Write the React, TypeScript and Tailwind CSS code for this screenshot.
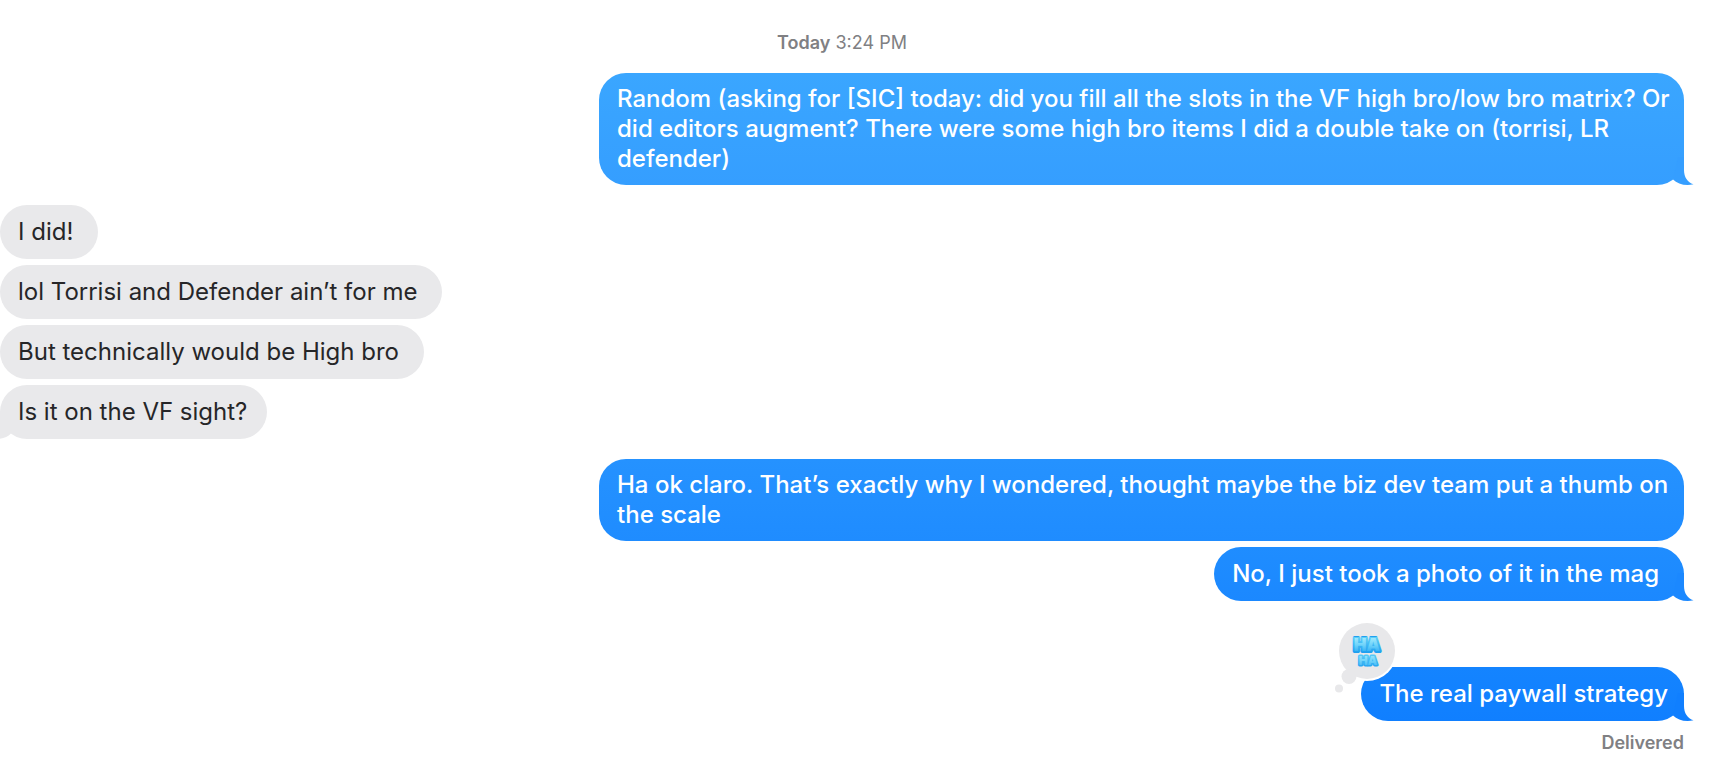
import React from 'react';
import clsx from 'clsx';

type Side = 'sent' | 'received';

interface Message {
  text: string;
  side: Side;
  color: string;
  tailColor?: string;
  padding?: string;
  reaction?: boolean;
}

const RECEIVED = 'bg-[#e9e9eb] text-[#262628]';

const GROUPS: Message[][] = [
  [
    {
      text: 'Random (asking for [SIC] today: did you fill all the slots in the VF high bro/low bro matrix? Or did editors augment? There were some high bro items I did a double take on (torrisi, LR defender)',
      side: 'sent',
      color: 'bg-linear-to-b from-[#3aa6ff] to-[#359eff] text-white',
      tailColor: 'text-[#359eff]',
      padding: 'py-[11px] pr-2',
    },
  ],
  [
    { text: 'I did!', side: 'received', color: RECEIVED },
    { text: 'lol Torrisi and Defender ain’t for me', side: 'received', color: RECEIVED },
    { text: 'But technically would be High bro', side: 'received', color: RECEIVED },
    {
      text: 'Is it on the VF sight?',
      side: 'received',
      color: RECEIVED,
      tailColor: 'text-[#e9e9eb]',
      padding: 'py-3 pr-5',
    },
  ],
  [
    {
      text: 'Ha ok claro. That’s exactly why I wondered, thought maybe the biz dev team put a thumb on the scale',
      side: 'sent',
      color: 'bg-linear-to-b from-[#2592ff] to-[#1f8cff] text-white',
      padding: 'py-[11px] pr-2',
    },
    {
      text: 'No, I just took a photo of it in the mag',
      side: 'sent',
      color: 'bg-linear-to-b from-[#1f8dff] to-[#1b88ff] text-white',
      tailColor: 'text-[#1b88ff]',
    },
  ],
];

const LAST_MESSAGE: Message = {
  text: 'The real paywall strategy',
  side: 'sent',
  color: 'bg-linear-to-b from-[#1484ff] to-[#107fff] text-white',
  tailColor: 'text-[#107fff]',
  padding: 'py-3 pr-4',
  reaction: true,
};

function Tail({ side, color }: { side: Side; color: string }) {
  return (
    <svg
      viewBox="0 0 24 28"
      width={24}
      height={28}
      aria-hidden="true"
      className={clsx('absolute bottom-0', color, side === 'sent' ? '-right-[10px]' : '-left-[10px] -scale-x-100')}
    >
      <path
        d="M8 0H14V13C14 20 17.5 25.5 23.5 27.3C15 29 7.5 27 3 22.4Z"
        fill="currentColor"
      />
    </svg>
  );
}

function HahaReaction() {
  return (
    <svg
      viewBox="0 0 66 76"
      width={66}
      height={76}
      role="img"
      aria-label="Haha"
      className="absolute -left-7 -top-[46px]"
    >
      <defs>
        {/* repeats every 16px so each row of letters gets its own fade */}
        <linearGradient id="haha-fill" gradientUnits="userSpaceOnUse" x1="0" y1="16" x2="0" y2="32" spreadMethod="repeat">
          <stop offset="0" stopColor="#a5ebfd" />
          <stop offset="0.5" stopColor="#6fd3fa" />
          <stop offset="1" stopColor="#2aa9f3" />
        </linearGradient>
        <linearGradient id="haha-edge" gradientUnits="userSpaceOnUse" x1="0" y1="16" x2="0" y2="32" spreadMethod="repeat">
          <stop offset="0" stopColor="#5fcff8" />
          <stop offset="1" stopColor="#1d9eef" />
        </linearGradient>
      </defs>
      <circle cx="34" cy="30" r="30" fill="#fff" />
      <circle cx="34" cy="30" r="28" fill="#e8e8ea" />
      <circle cx="16" cy="55.5" r="7.5" fill="#e8e8ea" />
      <circle cx="6" cy="67.5" r="4" fill="#e8e8ea" />
      <text
        fontFamily="Inter, sans-serif"
        fontWeight="900"
        textAnchor="middle"
        fill="url(#haha-fill)"
        stroke="url(#haha-edge)"
        strokeLinejoin="round"
        paintOrder="stroke"
      >
        <tspan x="34" y="30" fontSize="17" strokeWidth="4">HA</tspan>
        <tspan x="35" y="44" fontSize="12" strokeWidth="3">HA</tspan>
      </text>
    </svg>
  );
}

function Bubble({ message }: { message: Message }) {
  const { text, side, color, tailColor, padding = 'py-3 pr-[25px]', reaction } = message;

  return (
    <div
      className={clsx(
        'relative max-w-[1085px] rounded-[27px] pl-[18px] text-[24px] leading-[30px]',
        color,
        side === 'sent' ? 'self-end font-medium' : 'self-start',
        padding,
      )}
    >
      {tailColor && <Tail side={side} color={tailColor} />}
      <p className="relative">{text}</p>
      {reaction && <HahaReaction />}
    </div>
  );
}

export default function App() {
  return (
    <main className="flex flex-col gap-5 overflow-hidden bg-white pr-7 pt-[33px] font-['Inter',sans-serif]">
      <div className="text-center text-[18px] leading-5 text-[#808083]">
        <span className="font-semibold">Today</span> 3:24 PM
      </div>

      {GROUPS.map((group, i) => (
        <section key={i} className="flex flex-col gap-1.5">
          {group.map((message) => (
            <Bubble key={message.text} message={message} />
          ))}
        </section>
      ))}

      <section className="mt-[46px] flex flex-col gap-3">
        <Bubble message={LAST_MESSAGE} />
        <div className="self-end text-[18px] font-semibold leading-5 text-[#808083]">Delivered</div>
      </section>
    </main>
  );
}
